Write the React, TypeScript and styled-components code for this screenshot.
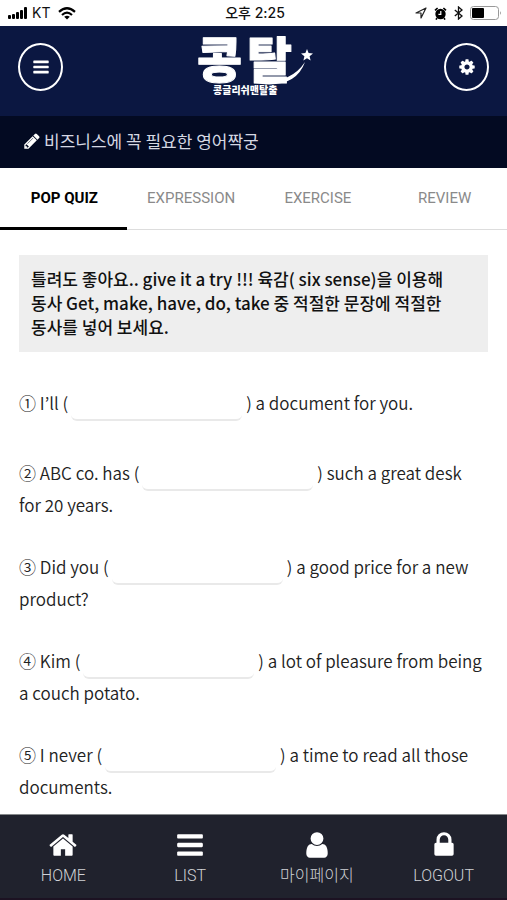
import React from "react";
import styled, { createGlobalStyle } from "styled-components";

const GlobalStyle = createGlobalStyle`
  *, *::before, *::after { box-sizing: border-box; }
  body {
    margin: 0;
    background: #fff;
    color: #222;
    font-family: "Noto Sans CJK KR", sans-serif;
    font-size: 17px;
  }
`;

const Page = styled.div`
  display: flex;
  flex-direction: column;
  min-height: 100vh;
`;

const StatusBar = styled.div`
  display: grid;
  grid-template-columns: 1fr auto 1fr;
  align-items: center;
  height: 26px;
  padding: 0 5px 0 8px;
  color: #111;
  font: 14px/26px Inter, "Noto Sans CJK KR", sans-serif;
`;

const StatusGroup = styled.div<{ $end?: boolean }>`
  display: flex;
  align-items: center;
  justify-content: ${(p) => (p.$end ? "flex-end" : "flex-start")};
  gap: ${(p) => (p.$end ? "7px" : "4px")};
`;

const Carrier = styled.span`
  margin-right: 4px;
`;

const Clock = styled.time`
  font-weight: 500;
`;

const Header = styled.header`
  display: flex;
  align-items: flex-start;
  justify-content: space-between;
  height: 90px;
  padding: 8px 18px 0;
  background: #0b1741;
`;

const RoundButton = styled.button`
  display: grid;
  place-items: center;
  width: 45px;
  height: 48px;
  margin-top: 9px;
  padding: 0;
  border: 2px solid #fff;
  border-radius: 50%;
  background: none;
  color: #fff;
`;

const TitleBar = styled.div`
  display: flex;
  align-items: center;
  gap: 3px;
  height: 52px;
  padding: 0 23px 2px;
  background: #030a22;
  color: #fff;
`;

const Title = styled.h1`
  margin: 0;
  color: #d5d8e2;
  font: 400 17px/24px "Noto Sans CJK KR", sans-serif;
`;

const Tabs = styled.nav`
  display: grid;
  grid-template-columns: repeat(4, 1fr);
  height: 62px;
  border-bottom: 1px solid #ddd;
`;

const Tab = styled.a<{ $active?: boolean }>`
  display: flex;
  align-items: center;
  justify-content: center;
  margin-bottom: -1px;
  padding-left: 2px;
  border-bottom: 3px solid ${(p) => (p.$active ? "#000" : "transparent")};
  color: ${(p) => (p.$active ? "#000" : "#8a8a8a")};
  font-family: Roboto, sans-serif;
  font-size: 15px;
  font-weight: ${(p) => (p.$active ? 700 : 400)};
  text-decoration: none;
`;

const Main = styled.main`
  flex: 1;
  padding: 25px 19px 12px;
`;

const Notice = styled.p`
  margin: 0 0 36px;
  padding: 12px 12px 13px;
  background: #eee;
  color: #111;
  font-weight: 500;
  line-height: 24px;
  word-break: keep-all;
`;

const Questions = styled.div`
  display: flex;
  flex-direction: column;
  gap: 35px;
  padding-right: 3px;
`;

const Question = styled.p`
  margin: 0;
  font-weight: 350;
  line-height: 24px;
`;

const Blank = styled.input`
  width: 171px;
  height: 30px;
  margin: 3px 4px 2px 3px;
  padding: 0 8px;
  border: 0;
  border-bottom: 2px solid #e9e9e9;
  border-radius: 6px;
  background: none;
  font: inherit;
  vertical-align: middle;
`;

const BottomNav = styled.nav`
  position: sticky;
  bottom: 0;
  display: grid;
  grid-template-columns: repeat(4, 1fr);
  height: 86px;
  padding-top: 15px;
  border-top: 1px solid #85888a;
  border-bottom: 2px solid #1c1222;
  background: #20222d;
`;

const NavItem = styled.a`
  display: flex;
  flex-direction: column;
  align-items: center;
  gap: 4px;
  color: #fff;
  text-decoration: none;
`;

const NavLabel = styled.span`
  color: #d0d2d6;
  font: 300 16px/24px Roboto, "Noto Sans CJK KR", sans-serif;
`;

const icons = {
  home: "M1472 992v480q0 26-19 45t-45 19h-384v-384h-256v384h-384q-26 0-45-19t-19-45v-480q0-1 .5-3t.5-3l575-474 575 474q1 2 1 6zm223-69l-62 74q-8 9-21 11h-3q-13 0-21-7l-692-577-692 577q-12 8-24 7-13-2-21-11l-62-74q-8-10-7-23.5t11-21.5l719-599q32-26 76-26t76 26l244 204v-195q0-14 9-23t23-9h192q14 0 23 9t9 23v408l219 182q10 8 11 21.5t-7 23.5z",
  bars: "M1664 1344v128q0 26-19 45t-45 19h-1408q-26 0-45-19t-19-45v-128q0-26 19-45t45-19h1408q26 0 45 19t19 45zm0-512v128q0 26-19 45t-45 19h-1408q-26 0-45-19t-19-45v-128q0-26 19-45t45-19h1408q26 0 45 19t19 45zm0-512v128q0 26-19 45t-45 19h-1408q-26 0-45-19t-19-45v-128q0-26 19-45t45-19h1408q26 0 45 19t19 45z",
  user: "M1536 1399q0 109-62.5 187t-150.5 78h-854q-88 0-150.5-78t-62.5-187q0-85 8.5-160.5t31.5-152 58.5-131 94-89 134.5-34.5q131 128 313 128t313-128q76 0 134.5 34.5t94 89 58.5 131 31.5 152 8.5 160.5zm-256-887q0 159-112.5 271.5t-271.5 112.5-271.5-112.5-112.5-271.5 112.5-271.5 271.5-112.5 271.5 112.5 112.5 271.5z",
  lock: "M640 768h512v-192q0-106-75-181t-181-75-181 75-75 181v192zm832 96v576q0 40-28 68t-68 28h-960q-40 0-68-28t-28-68v-576q0-40 28-68t68-28h32v-192q0-184 132-316t316-132 316 132 132 316v192h32q40 0 68 28t28 68z",
  cog: "M1152 896q0-106-75-181t-181-75-181 75-75 181 75 181 181 75 181-75 75-181zm512-109v222q0 12-8 23t-20 13l-185 28q-19 54-39 91 35 50 107 138 10 12 10 25t-9 23q-27 37-99 108t-94 71q-12 0-26-9l-138-108q-44 23-91 38-16 136-29 186-7 28-36 28h-222q-14 0-24.5-8.5t-11.5-21.5l-28-184q-49-16-90-37l-141 107q-10 9-25 9-14 0-25-11-126-114-165-168-7-10-7-23 0-12 8-23 15-21 51-66.5t54-70.5q-27-50-41-99l-183-27q-13-2-21-12.5t-8-23.5v-222q0-12 8-23t19-13l186-28q14-46 39-92-40-57-107-138-10-12-10-24 0-10 9-23 26-36 98.5-107.5t94.5-71.5q13 0 26 10l138 107q44-23 91-38 16-136 29-186 7-28 36-28h222q14 0 24.5 8.5t11.5 21.5l28 184q49 16 90 37l142-107q9-9 24-9 13 0 25 10 129 119 165 170 7 8 7 22 0 12-8 23-15 21-51 66.5t-54 70.5q26 50 41 98l183 28q13 2 21 12.5t8 23.5z",
  pencil: "M491 1536l91-91-235-235-91 91v107h128v128h107zm523-928q0-22-22-22-10 0-17 7l-542 542q-7 7-7 17 0 22 22 22 10 0 17-7l542-542q7-7 7-17zm-54-192l416 416-832 832h-416v-416zm683 96q0 53-37 90l-166 166-416-416 166-165q36-38 90-38 53 0 91 38l235 234q37 39 37 91z",
};

const Icon = ({ name, size }: { name: keyof typeof icons; size: number }) => (
  <svg width={size} height={size} viewBox="0 0 1792 1792" fill="currentColor" aria-hidden="true">
    <path d={icons[name]} />
  </svg>
);

const Signal = () => (
  <svg width="20" height="12" viewBox="0 0 20 12" fill="#000" aria-hidden="true">
    <rect x="0" y="8" width="3" height="4" rx="1" />
    <rect x="4" y="7" width="3" height="5" rx="1" />
    <rect x="8" y="5" width="3" height="7" rx="1" />
    <rect x="12" y="3" width="3" height="9" rx="1" />
    <rect x="16" y="0" width="3" height="12" rx="1" />
  </svg>
);

const Wifi = () => (
  <svg width="18" height="13" viewBox="0 0 18 13" fill="none" stroke="#000" strokeWidth="2.2" aria-hidden="true">
    <path d="M1 4.9Q9-2.4 17 4.9" />
    <path d="M4 8Q9 3.4 14 8" />
    <path d="M9 12.6L6.2 9.8Q9 7.6 11.8 9.8Z" fill="#000" stroke="none" />
  </svg>
);

const Location = () => (
  <svg width="12" height="12" viewBox="0 0 12 12" fill="none" stroke="#222" strokeWidth="1.2" aria-hidden="true">
    <path d="M11 1L1 6H6V11Z" strokeLinejoin="round" />
  </svg>
);

const Alarm = () => (
  <svg width="13" height="13" viewBox="0 0 13 13" aria-hidden="true">
    <circle cx="6.5" cy="7" r="5.2" />
    <path d="M1 3.4L3.6 1M12 3.4L9.4 1M3 11L2 12.6M10 11L11 12.6" stroke="#000" strokeWidth="1.6" />
    <path d="M6.8 4V7.4H4.4" fill="none" stroke="#fff" strokeWidth="1.2" />
  </svg>
);

const Bluetooth = () => (
  <svg width="9" height="14" viewBox="0 0 9 14" fill="none" stroke="#111" strokeWidth="1.3" aria-hidden="true">
    <path d="M.8 4L8 10L4.5 13V1L8 4L.8 10" />
  </svg>
);

const Battery = () => (
  <svg width="32" height="14" viewBox="0 0 32 14" aria-hidden="true">
    <rect x=".5" y=".5" width="28" height="13" rx="3" fill="none" stroke="#999" />
    <rect x="2" y="2" width="12" height="10" rx="1" />
    <path d="M30 5q1.6 2 0 4z" fill="#777" />
  </svg>
);

const Logo = () => (
  <svg width="124" height="68" viewBox="0 0 124 68" fill="#fff" overflow="visible" role="img" aria-label="콩탈 콩글리쉬맨탈출">
    <g fontFamily="Noto Sans CJK KR, sans-serif" fontWeight="900">
      <text x="5 55" y="44" fontSize="49" stroke="#fff" strokeWidth="1" strokeLinejoin="round">콩탈</text>
      <text x="21" y="60" fontSize="10">콩글리쉬맨탈출</text>
    </g>
    <path d="M62 47Q98 51 113 28Q103 56 62 49Z" />
    <path d="M115 15L116.600 19L121 19.500L117.600 22.300L118.600 26.500L115 24.200L111.400 26.500L112.400 22.300L109 19.500L113.400 19Z" />
  </svg>
);

const quiz = [
  ["① I’ll (", ") a document for you."],
  ["② ABC co. has (", ") such a great desk for 20 years."],
  ["③ Did you (", ") a good price for a new product?"],
  ["④ Kim (", ") a lot of pleasure from being a couch potato."],
  ["⑤ I never (", ") a time to read all those documents."],
];

const tabs = ["POP QUIZ", "EXPRESSION", "EXERCISE", "REVIEW"];

const links: { icon: keyof typeof icons; label: string }[] = [
  { icon: "home", label: "HOME" },
  { icon: "bars", label: "LIST" },
  { icon: "user", label: "마이페이지" },
  { icon: "lock", label: "LOGOUT" },
];

export default function App() {
  return (
    <Page>
      <GlobalStyle />
      <StatusBar>
        <StatusGroup>
          <Signal />
          <Carrier>KT</Carrier>
          <Wifi />
        </StatusGroup>
        <Clock>오후 2:25</Clock>
        <StatusGroup $end>
          <Location />
          <Alarm />
          <Bluetooth />
          <Battery />
        </StatusGroup>
      </StatusBar>
      <Header>
        <RoundButton aria-label="메뉴">
          <Icon name="bars" size={18} />
        </RoundButton>
        <Logo />
        <RoundButton aria-label="설정">
          <Icon name="cog" size={18} />
        </RoundButton>
      </Header>
      <TitleBar>
        <Icon name="pencil" size={18} />
        <Title>비즈니스에 꼭 필요한 영어짝궁</Title>
      </TitleBar>
      <Tabs>
        {tabs.map((tab, i) => (
          <Tab key={tab} href="#" $active={i === 0}>{tab}</Tab>
        ))}
      </Tabs>
      <Main>
        <Notice>
          틀려도 좋아요.. give it a try !!! 육감( six sense)을 이용해 동사 Get, make, have, do, take 중 적절한 문장에 적절한 동사를 넣어 보세요.
        </Notice>
        <Questions>
          {quiz.map(([before, after], i) => (
            <Question key={before}>
              {before}
              <Blank type="text" aria-label={`${i + 1}`} />
              {after}
            </Question>
          ))}
        </Questions>
      </Main>
      <BottomNav>
        {links.map(({ icon, label }) => (
          <NavItem key={label} href="#">
            <Icon name={icon} size={30} />
            <NavLabel>{label}</NavLabel>
          </NavItem>
        ))}
      </BottomNav>
    </Page>
  );
}
